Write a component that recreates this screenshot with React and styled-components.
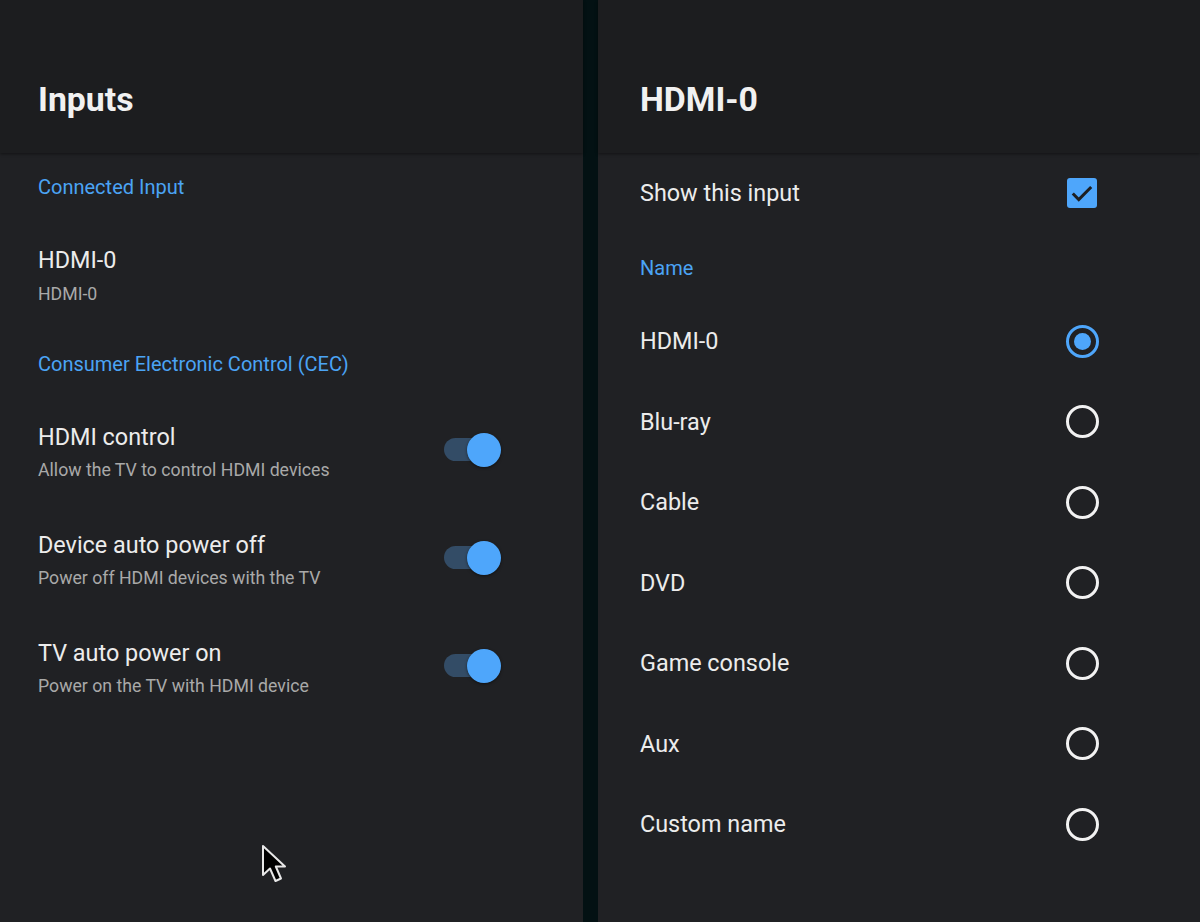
import React from 'react';
import styled, { createGlobalStyle } from 'styled-components';

const GlobalStyle = createGlobalStyle`
  html, body {
    margin: 0;
    padding: 0;
    background: #202124;
  }
  body {
    font-family: Roboto, "Noto Sans", sans-serif;
    -webkit-font-smoothing: antialiased;
  }
`;

const Screen = styled.div`
  position: relative;
  display: flex;
  width: 1200px;
  height: 922px;
  overflow: hidden;
  background: #202124;
`;

const Panel = styled.section`
  display: flex;
  flex-direction: column;
  width: ${props => props.width || 'auto'};
  flex: ${props => (props.width ? '0 0 auto' : '1 1 auto')};
  background: #202124;
`;

const Divider = styled.div`
  flex: 0 0 15px;
  background: #031113;
`;

const Header = styled.header`
  position: relative;
  height: 153px;
  box-sizing: border-box;
  display: flex;
  align-items: flex-end;
  padding: 0 0 33px ${props => props.inset}px;
  background: #1c1d1f;
  box-shadow: 0 1px 3px rgba(0, 0, 0, 0.45);
  z-index: 1;
`;

const Title = styled.h1`
  margin: 0;
  font-size: 33.8px;
  line-height: 40px;
  font-weight: 700;
  color: #f1f1f1;
  letter-spacing: 0;
`;

const Body = styled.div`
  display: flex;
  flex-direction: column;
  padding: 0 ${props => props.right}px 0 ${props => props.inset}px;
`;

const SectionLabel = styled.div`
  padding: ${props => props.top}px 0 ${props => props.bottom}px;
  font-size: 20px;
  line-height: 22px;
  font-weight: 400;
  color: #4ba4f5;
`;

const Item = styled.div`
  display: flex;
  align-items: center;
  justify-content: space-between;
  padding: 24px 0 25px;
`;

const ItemText = styled.div`
  display: flex;
  flex-direction: column;
  gap: ${props => props.gap || 7}px;
`;

const ItemTitle = styled.div`
  font-size: 23.4px;
  line-height: 28px;
  color: #ececec;
`;

const ItemSub = styled.div`
  font-size: 17.7px;
  line-height: 24px;
  color: #a9a9a9;
`;

const Switch = styled.div`
  position: relative;
  width: 57px;
  height: 34px;
  margin-bottom: 6px;
`;

const Track = styled.div`
  position: absolute;
  left: 0;
  top: 5px;
  width: 50px;
  height: 23px;
  border-radius: 12px;
  background: #334c66;
`;

const Thumb = styled.div`
  position: absolute;
  right: 0;
  top: 0;
  width: 34px;
  height: 34px;
  border-radius: 50%;
  background: #4ea6fb;
  box-shadow: 0 1px 3px rgba(0, 0, 0, 0.5);
`;

const OptionRow = styled.div`
  display: flex;
  align-items: center;
  justify-content: space-between;
  height: ${props => props.h}px;
`;

const OptionLabel = styled.div`
  font-size: 23.4px;
  line-height: 28px;
  color: #ececec;
`;

const Check = styled.div`
  width: 30px;
  height: 30px;
  margin-right: 2px;
  border-radius: 3px;
  background: #4ea6fb;
  display: flex;
  align-items: center;
  justify-content: center;
`;

const Radio = styled.div`
  width: 33px;
  height: 33px;
  box-sizing: border-box;
  border-radius: 50%;
  border: 3px solid ${props => (props.checked ? '#4ea6fb' : '#f2f2f2')};
  display: flex;
  align-items: center;
  justify-content: center;

  &::after {
    content: '';
    display: ${props => (props.checked ? 'block' : 'none')};
    width: 17px;
    height: 17px;
    border-radius: 50%;
    background: #4ea6fb;
  }
`;

const Cursor = styled.svg`
  position: absolute;
  left: 261px;
  top: 844px;
`;

const cecItems = [
  { title: 'HDMI control', sub: 'Allow the TV to control HDMI devices' },
  { title: 'Device auto power off', sub: 'Power off HDMI devices with the TV' },
  { title: 'TV auto power on', sub: 'Power on the TV with HDMI device' },
];

const names = ['HDMI-0', 'Blu-ray', 'Cable', 'DVD', 'Game console', 'Aux', 'Custom name'];

const Toggle = () => (
  <Switch>
    <Track />
    <Thumb />
  </Switch>
);

const App = () => (
  <Screen>
    <GlobalStyle />
    <Panel width="583px">
      <Header inset={38}>
        <Title>Inputs</Title>
      </Header>
      <Body inset={38} right={82}>
        <SectionLabel top={23} bottom={24}>Connected Input</SectionLabel>
        <Item>
          <ItemText gap={8}>
            <ItemTitle>HDMI-0</ItemTitle>
            <ItemSub>HDMI-0</ItemSub>
          </ItemText>
        </Item>
        <SectionLabel top={22} bottom={24}>Consumer Electronic Control (CEC)</SectionLabel>
        {cecItems.map(it => (
          <Item key={it.title}>
            <ItemText>
              <ItemTitle>{it.title}</ItemTitle>
              <ItemSub>{it.sub}</ItemSub>
            </ItemText>
            <Toggle />
          </Item>
        ))}
      </Body>
    </Panel>
    <Divider />
    <Panel>
      <Header inset={42}>
        <Title>HDMI-0</Title>
      </Header>
      <Body inset={42} right={101}>
        <OptionRow h={80}>
          <OptionLabel>Show this input</OptionLabel>
          <Check>
            <svg width="26" height="26" viewBox="0 0 24 24">
              <path d="M3.5 12.5l5.5 5.5L20.5 6.5" fill="none" stroke="#1d1f22" strokeWidth="2.8" />
            </svg>
          </Check>
        </OptionRow>
        <SectionLabel top={24} bottom={22}>Name</SectionLabel>
        {names.map((n, i) => (
          <OptionRow key={n} h={80.5}>
            <OptionLabel>{n}</OptionLabel>
            <Radio checked={i === 0} />
          </OptionRow>
        ))}
      </Body>
    </Panel>
    <Cursor width="28" height="42" viewBox="0 0 28 42">
      <path
        d="M2 2 L2 31 L9 24.5 L14.5 37 L20 34.5 L14.8 22.5 L24 22.5 Z"
        fill="#000"
        stroke="#e8e8e8"
        strokeWidth="2"
        strokeLinejoin="round"
      />
    </Cursor>
  </Screen>
);

export default App;
